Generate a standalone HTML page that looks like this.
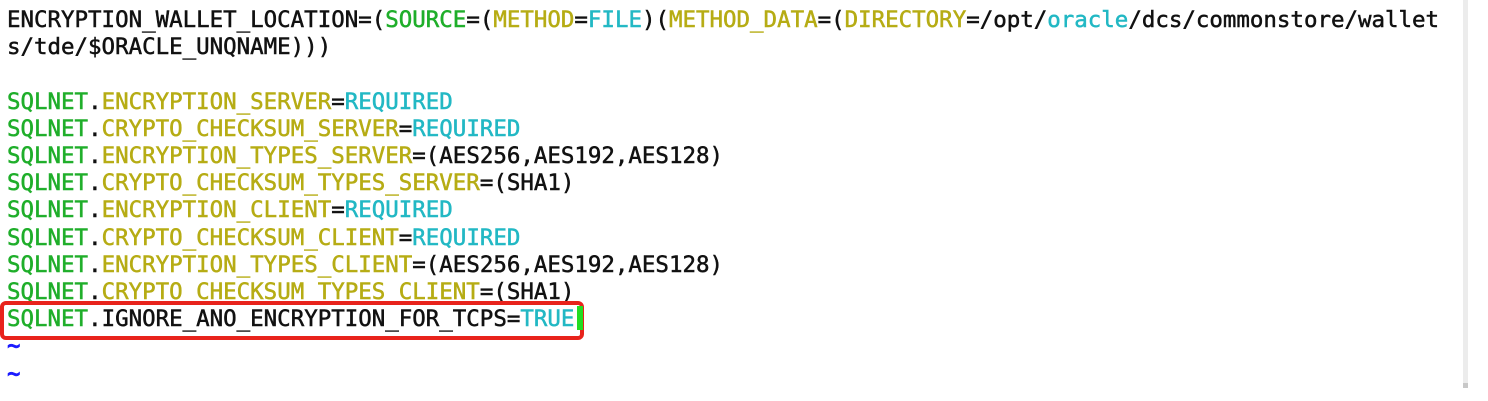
<!DOCTYPE html>
<html><head><style>
html,body{margin:0;padding:0;background:#fff;width:1488px;height:401px;overflow:hidden;position:relative}
pre{margin:0;position:absolute;left:7px;top:7px;font-family:"DejaVu Sans Mono","Liberation Mono",monospace;font-size:22.45px;line-height:27.2px;color:#111;white-space:pre;-webkit-text-stroke:0.5px currentColor}
.g{color:#1fae2a}.y{color:#b6ac14}.c{color:#22b8c4}.b{color:#1a1aff;font-weight:bold}
.box{position:absolute;left:0px;top:301px;width:576px;height:31px;border:4px solid #e8231c;border-radius:6px}
.cur{position:absolute;left:577px;top:306px;width:6px;height:24px;background:#22dd22}
.sb{position:absolute;left:1463px;top:0;width:5px;height:385px;background:#ececec}
.sb2{position:absolute;left:1463px;top:383px;width:5px;height:5px;background:#c8c8c8}
</style></head><body>
<pre>ENCRYPTION_WALLET_LOCATION=(<span class="g">SOURCE</span>=(<span class="y">METHOD</span>=<span class="c">FILE</span>)(<span class="y">METHOD_DATA</span>=(<span class="y">DIRECTORY</span>=/opt/<span class="c">oracle</span>/dcs/commonstore/wallet
s/tde/$ORACLE_UNQNAME)))

<span class="g">SQLNET</span>.<span class="y">ENCRYPTION_SERVER</span>=<span class="c">REQUIRED</span>
<span class="g">SQLNET</span>.<span class="y">CRYPTO_CHECKSUM_SERVER</span>=<span class="c">REQUIRED</span>
<span class="g">SQLNET</span>.<span class="y">ENCRYPTION_TYPES_SERVER</span>=(AES256,AES192,AES128)
<span class="g">SQLNET</span>.<span class="y">CRYPTO_CHECKSUM_TYPES_SERVER</span>=(SHA1)
<span class="g">SQLNET</span>.<span class="y">ENCRYPTION_CLIENT</span>=<span class="c">REQUIRED</span>
<span class="g">SQLNET</span>.<span class="y">CRYPTO_CHECKSUM_CLIENT</span>=<span class="c">REQUIRED</span>
<span class="g">SQLNET</span>.<span class="y">ENCRYPTION_TYPES_CLIENT</span>=(AES256,AES192,AES128)
<span class="g">SQLNET</span>.<span class="y">CRYPTO_CHECKSUM_TYPES_CLIENT</span>=(SHA1)
<span class="g">SQLNET</span>.IGNORE_ANO_ENCRYPTION_FOR_TCPS=<span class="c">TRUE</span>
<span class="b">~</span>
<span class="b">~</span></pre>
<div class="box"></div>
<div class="cur"></div>
<div class="sb"></div><div class="sb2"></div>
</body></html>
